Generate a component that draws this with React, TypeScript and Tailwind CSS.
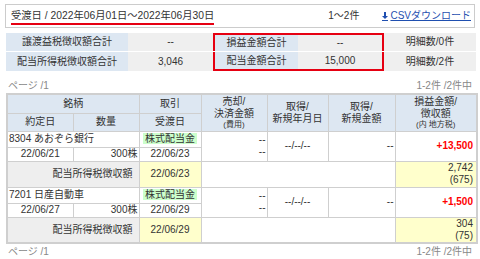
import React from "react";

const font = { fontFamily: '"Liberation Sans", "Noto Sans CJK JP", sans-serif' };

function DownloadIcon() {
  return (
    <svg width="6" height="9" viewBox="0 0 6 9" className="inline-block">
      <rect x="2" y="0" width="2" height="4" fill="#1f4fb0" />
      <path d="M0 4 H6 L3 7 Z" fill="#1f4fb0" />
      <rect x="0" y="8" width="6" height="1" fill="#1f4fb0" />
    </svg>
  );
}

const th = "border border-[#cfcfcf] bg-[#dde7f2] font-normal text-center align-middle px-0";
const td = "border border-[#cfcfcf] align-middle";

export default function App() {
  return (
    <div className="w-[480px] h-[259px] bg-white text-[10px] leading-[12px] text-[#333] overflow-hidden" style={font}>
      <div className="mx-[5px] mt-[4px] h-[24px] border border-[#cccccc] flex items-center pl-[5px] pr-[3px]">
        <span className="text-[10.3px] border-b-2 border-[#e60012] pb-[1px] mt-[2px]">受渡日 / 2022年06月01日〜2022年06月30日</span>
        <span className="ml-auto mr-[23px]">1〜2件</span>
        <span className="flex items-center gap-[2px] text-[#1f4fb0] underline">
          <DownloadIcon />
          CSVダウンロード
        </span>
      </div>

      <div className="mx-[6px] mt-[5px] w-[470px] flex flex-col">
        <div className="flex h-[19px] border-b border-white">
          <div className="w-[122px] bg-[#dde7f2] flex items-center justify-center">譲渡益税徴収額合計</div>
          <div className="w-[85px] bg-[#efefef] flex items-center justify-center">--</div>
          <div className="w-[85px] bg-[#dde7f2] flex items-center justify-center border-t-2 border-l-2 border-[#e60012]">損益金額合計</div>
          <div className="w-[86px] bg-[#efefef] flex items-center justify-center border-t-2 border-r-2 border-[#e60012]">--</div>
          <div className="w-[92px] bg-[#efefef] flex items-center justify-center">明細数/0件</div>
        </div>
        <div className="flex h-[19px]">
          <div className="w-[122px] bg-[#dde7f2] flex items-center justify-center">配当所得税徴収額合計</div>
          <div className="w-[85px] bg-[#efefef] flex items-center justify-center">3,046</div>
          <div className="w-[85px] bg-[#dde7f2] flex items-center justify-center border-b-2 border-l-2 border-[#e60012]">配当金額合計</div>
          <div className="w-[86px] bg-[#efefef] flex items-center justify-center border-b-2 border-r-2 border-[#e60012]">15,000</div>
          <div className="w-[92px] bg-[#efefef] flex items-center justify-center">明細数/2件</div>
        </div>
      </div>

      <div className="flex justify-between mx-[8px] mt-[9px] h-[12px] text-[#888]">
        <span>ページ /1</span>
        <span>1-2件 /2件中</span>
      </div>

      <table className="ml-[6px] mt-[1px] w-[470px] border-collapse table-fixed border-2 border-[#cfcfcf]">
        <colgroup>
          <col className="w-[66px]" />
          <col className="w-[66px]" />
          <col className="w-[62px]" />
          <col className="w-[66px]" />
          <col className="w-[61px]" />
          <col className="w-[67px]" />
          <col className="w-[82px]" />
        </colgroup>
        <thead>
          <tr className="h-[19px]">
            <th colSpan={2} className={th}>銘柄</th>
            <th className={th}>取引</th>
            <th rowSpan={2} className={th}>
              <div>売却/</div>
              <div>決済金額</div>
              <div className="text-[8px] leading-[10px]">(費用)</div>
            </th>
            <th rowSpan={2} className={th}>
              <div>取得/</div>
              <div>新規年月日</div>
            </th>
            <th rowSpan={2} className={th}>
              <div>取得/</div>
              <div>新規金額</div>
            </th>
            <th rowSpan={2} className={th}>
              <div>損益金額/</div>
              <div>徴収額</div>
              <div className="text-[8px] leading-[10px]">(内 地方税)</div>
            </th>
          </tr>
          <tr className="h-[18px]">
            <th className={th}>約定日</th>
            <th className={th}>数量</th>
            <th className={th}>受渡日</th>
          </tr>
        </thead>
        <tbody>
          {[
            { name: "8304 あおぞら銀行", trade: "22/06/21", settle: "22/06/23", gain: "+13,500", tax: "2,742", local: "(675)" },
            { name: "7201 日産自動車", trade: "22/06/27", settle: "22/06/29", gain: "+1,500", tax: "304", local: "(75)" },
          ].map((r) => (
            <React.Fragment key={r.name}>
              <tr className="h-[16px]">
                <td colSpan={2} className={`${td} pl-[1px]`}>{r.name}</td>
                <td className={`${td} text-center`}>
                  <span className="bg-[#ccffcc] px-[2px]">株式配当金</span>
                </td>
                <td rowSpan={2} className={`${td} text-right pr-[1px]`}>
                  <div>--</div>
                  <div>--</div>
                </td>
                <td rowSpan={2} className={`${td} text-center`}>--/--/--</td>
                <td rowSpan={2} className={`${td} text-right pr-[1px]`}>--</td>
                <td rowSpan={2} className={`${td} text-right pr-[3px] font-bold text-[#ff0000]`}>{r.gain}</td>
              </tr>
              <tr className="h-[14px]">
                <td className={`${td} text-center`}>{r.trade}</td>
                <td className={`${td} text-right pr-[1px]`}>300株</td>
                <td className={`${td} text-center`}>{r.settle}</td>
              </tr>
              <tr className="h-[26px]">
                <td colSpan={2} className={`${td} bg-[#eeeeee] text-right pr-[6px]`}>配当所得税徴収額</td>
                <td className={`${td} bg-[#ffffcc] text-center`}>{r.settle}</td>
                <td colSpan={3} className={td}></td>
                <td className={`${td} bg-[#ffffcc] text-right pr-[3px]`}>
                  <div>{r.tax}</div>
                  <div>{r.local}</div>
                </td>
              </tr>
            </React.Fragment>
          ))}
        </tbody>
      </table>

      <div className="flex justify-between mx-[8px] mt-[2px] text-[#888]">
        <span>ページ /1</span>
        <span>1-2件 /2件中</span>
      </div>
    </div>
  );
}
